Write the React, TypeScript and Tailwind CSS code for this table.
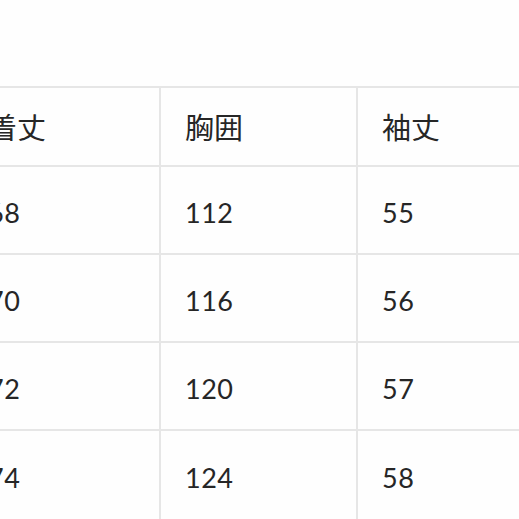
const headers = ["着丈", "胸囲", "袖丈"];

const rows = [
  ["68", "112", "55"],
  ["70", "116", "56"],
  ["72", "120", "57"],
  ["74", "124", "58"],
];

export default function App() {
  return (
    <div
      className="w-[519px] h-[519px] overflow-hidden bg-[#fefefe] flex flex-col text-[#262626]"
      style={{ fontFamily: 'Lato, "Noto Sans CJK JP", sans-serif' }}
    >
      <div className="h-[86px] flex-shrink-0" />

      <div className="-ml-[36px] border-t-2 border-[#e6e6e6] flex-1">
        {/* Header */}
        <div className="flex h-[79px] border-b-2 border-[#e6e6e6]">
          {headers.map((h) => (
            <div
              key={h}
              className="w-[197px] flex-shrink-0 border-r-2 border-[#e6e6e6] flex items-center pl-[24px] text-[29px] leading-none"
              style={{ fontFamily: '"Noto Sans CJK JP", sans-serif' }}
            >
              {h}
            </div>
          ))}
        </div>

        {/* Rows */}
        {rows.map((r, i) => (
          <div
            key={i}
            className={`flex h-[88px] ${i < rows.length - 1 ? "border-b-2 border-[#e6e6e6]" : ""}`}
          >
            {r.map((v, j) => (
              <div
                key={j}
                className="w-[197px] flex-shrink-0 border-r-2 border-[#e6e6e6] flex items-center pl-[24px] pt-[4px] text-[27px] leading-none tracking-[0.5px]"
              >
                {v}
              </div>
            ))}
          </div>
        ))}
      </div>

      <div className="h-[3px] flex-shrink-0 bg-[#222]" />
    </div>
  );
}
